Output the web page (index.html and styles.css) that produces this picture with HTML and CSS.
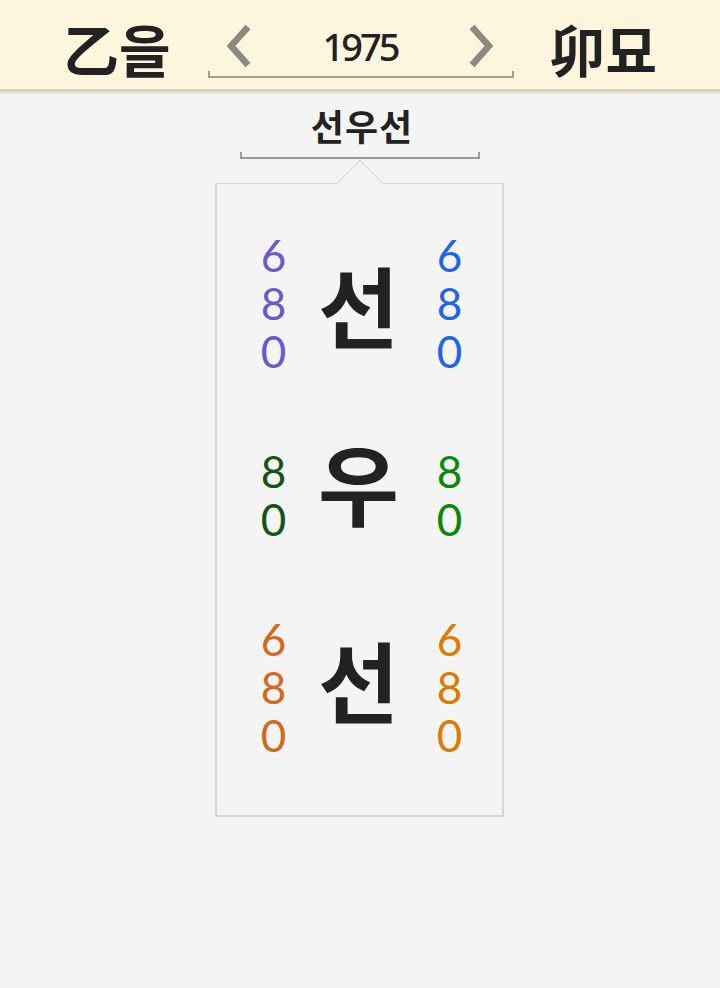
FILE: index.html
```html
<!DOCTYPE html>
<html lang="ko">
<head>
<meta charset="utf-8">
<title>선우선</title>
<link rel="stylesheet" href="styles.css">
</head>
<body>
<header class="topbar">
  <div class="ganji">乙을</div>
  <div class="yearnav">
    <div class="yearrow">
      <svg class="chev" width="26" height="44" viewBox="0 0 26 44"><polyline points="22,3 5,22 22,41" fill="none" stroke="#8b8a7e" stroke-width="6.5"/></svg>
      <span class="year">1975</span>
      <svg class="chev" width="26" height="44" viewBox="0 0 26 44"><polyline points="4,3 21,22 4,41" fill="none" stroke="#8b8a7e" stroke-width="6.5"/></svg>
    </div>
    <div class="bracket nav-bracket"></div>
  </div>
  <div class="ganji">卯묘</div>
</header>
<main class="content">
  <div class="title">선우선</div>
  <div class="bracket title-bracket"></div>
  <section class="card">
    <div class="notch"></div>
    <div class="row">
      <div class="nums c-purple"><span>6</span><span>8</span><span>0</span></div>
      <div class="syl">선</div>
      <div class="nums c-blue"><span>6</span><span>8</span><span>0</span></div>
    </div>
    <div class="row">
      <div class="nums c-dgreen"><span>8</span><span>0</span></div>
      <div class="syl syl-mid">우</div>
      <div class="nums c-green"><span>8</span><span>0</span></div>
    </div>
    <div class="row">
      <div class="nums c-choc"><span>6</span><span>8</span><span>0</span></div>
      <div class="syl syl-last">선</div>
      <div class="nums c-orange"><span>6</span><span>8</span><span>0</span></div>
    </div>
  </section>
</main>
</body>
</html>
```

FILE: styles.css
```css
* { box-sizing: border-box; }
html, body { margin: 0; padding: 0; }
body {
  background: #f4f4f4;
  width: 720px;
  min-height: 988px;
  font-family: "Noto Sans CJK KR", "Noto Sans", sans-serif;
  color: #222;
}
.topbar {
  height: 92px;
  background: #fdf6dc;
  border-bottom: 3px solid #ddd5b9;
  box-shadow: 0 2px 0 #ebe7d8;
  display: flex;
  justify-content: center;
  align-items: center;
  padding-top: 10px;
}
.ganji {
  font-size: 56px;
  font-weight: 700;
  line-height: 1;
  color: #222;
  margin-bottom: 4px;
}
.yearnav {
  width: 306px;
  margin: 0 36px 0 37px;
  display: flex;
  flex-direction: column;
}
.yearrow {
  height: 50px;
  display: flex;
  align-items: center;
  justify-content: space-between;
  padding: 0 19px 0 18px;
}
.chev { display: block; }
.year {
  font-family: "Noto Sans", sans-serif;
  font-size: 38px;
  font-weight: 500;
  letter-spacing: -3px;
  line-height: 1;
  color: #222;
}
.bracket {
  height: 7px;
  border: 2px solid #a3a08d;
  border-top: none;
}
.content {
  display: flex;
  flex-direction: column;
  align-items: center;
  padding-top: 8px;
}
.title {
  font-size: 36px;
  font-weight: 700;
  line-height: 50px;
  letter-spacing: 1px;
  color: #222;
  margin-left: 4px;
}
.title-bracket {
  width: 240px;
  border-color: #9b9b9b;
  margin-top: 2px;
}
.card {
  position: relative;
  width: 289px;
  height: 634px;
  margin-top: 24px;
  margin-left: -2px;
  border: 2px solid #d6d6d6;
  border-top-width: 1.5px;
  background: #f4f4f4;
  padding: 23px 0 35px 37px;
}
.notch {
  position: absolute;
  top: -17px;
  left: 126px;
  width: 34px;
  height: 34px;
  background: #f4f4f4;
  border-top: 1.5px solid #d6d6d6;
  border-left: 1.5px solid #d6d6d6;
  transform: rotate(45deg);
}
.row {
  height: 192px;
  display: grid;
  grid-template-columns: 40px 130px 52px;
  align-items: center;
}
.nums {
  display: flex;
  flex-direction: column;
  align-items: center;
  font-family: "Lato", sans-serif;
  font-size: 44px;
  line-height: 48px;
}
.syl {
  text-align: center;
  font-size: 88px;
  font-weight: 700;
  line-height: 1;
  color: #222;
}
.syl-mid { margin-bottom: 28px; }
.syl-last { margin-bottom: 18px; }
.c-purple { color: #6a5acd; }
.c-blue { color: #1e66e6; }
.c-dgreen { color: #145414; }
.c-green { color: #0a880a; }
.c-choc { color: #d2691e; }
.c-orange { color: #de7a00; }
```
